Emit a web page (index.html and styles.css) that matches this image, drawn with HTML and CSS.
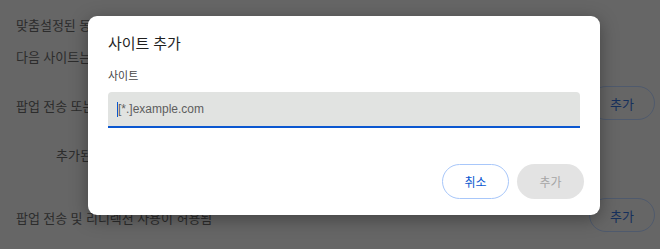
FILE: index.html
```html
<!DOCTYPE html>
<html lang="ko">
<head>
<meta charset="utf-8">
<title>사이트 추가</title>
<link rel="stylesheet" href="styles.css">
</head>
<body>
<div class="page">
  <div class="line">맞춤설정된 동작</div>
  <div class="line second">다음 사이트는 기본 설정 대신 맞춤 설정을 따릅니다</div>
  <div class="row r3">
    <span class="row-text">팝업 전송 또는 리디렉션 사용이 차단됨</span>
    <span class="bg-btn">추가</span>
  </div>
  <div class="line empty">추가된 사이트 없음</div>
  <div class="row r5">
    <span class="row-text">팝업 전송 및 리디렉션 사용이 허용됨</span>
    <span class="bg-btn">추가</span>
  </div>
</div>

<div class="dialog">
  <div class="title">사이트 추가</div>
  <div class="label">사이트</div>
  <div class="input"><span class="caret"></span><span class="placeholder">[*.]example.com</span></div>
  <div class="actions">
    <span class="btn cancel">취소</span>
    <span class="btn add">추가</span>
  </div>
</div>
</body>
</html>
```

FILE: styles.css
```css
html, body {
  margin: 0;
  padding: 0;
}
body {
  width: 660px;
  height: 249px;
  overflow: hidden;
  background: #666666;
  font-family: "Noto Sans", "Noto Sans CJK KR", sans-serif;
  position: relative;
}
.page {
  padding: 14px 5px 0 16px;
  color: #2c2c2c;
  font-size: 13px;
}
.line {
  height: 22px;
  line-height: 22px;
}
.second {
  margin-top: 10px;
}
.row {
  display: flex;
  align-items: center;
  justify-content: space-between;
  height: 34px;
}
.row-text {
  padding-top: 4px;
}
.r3 {
  margin-top: 18px;
}
.empty {
  margin-top: 24px;
  padding-left: 40px;
}
.r5 {
  margin-top: 32px;
}
.bg-btn {
  box-sizing: border-box;
  width: 66px;
  height: 34px;
  border: 1px solid #4f5a6d;
  border-radius: 17px;
  display: flex;
  align-items: center;
  justify-content: center;
  color: #16305c;
  font-size: 13px;
}
.dialog {
  position: absolute;
  left: 88px;
  top: 16px;
  width: 512px;
  box-sizing: border-box;
  background: #ffffff;
  border-radius: 9px;
  padding: 16px 16px 16px 20px;
  box-shadow: 0 4px 18px rgba(0, 0, 0, 0.35);
}
.title {
  height: 22px;
  line-height: 22px;
  font-size: 15px;
  color: #1f1f1f;
}
.label {
  margin-top: 14px;
  height: 16px;
  line-height: 16px;
  font-size: 11px;
  color: #474747;
}
.input {
  margin-top: 8px;
  margin-right: 4px;
  height: 34px;
  background: #e1e3e1;
  border-bottom: 2px solid #0b57d0;
  border-radius: 4px 4px 0 0;
  display: flex;
  align-items: center;
  padding-left: 9px;
}
.caret {
  width: 1px;
  height: 15px;
  background: #0b57d0;
}
.placeholder {
  font-family: "Liberation Sans", "Noto Sans", sans-serif;
  font-size: 12px;
  color: #5e5e5e;
}
.actions {
  margin-top: 36px;
  display: flex;
  justify-content: flex-end;
  gap: 8px;
}
.btn {
  box-sizing: border-box;
  width: 67px;
  height: 35px;
  border-radius: 18px;
  display: flex;
  align-items: center;
  justify-content: center;
  font-size: 12px;
}
.cancel {
  border: 1px solid #a8c7fa;
  color: #0b57d0;
}
.add {
  background: #e3e3e3;
  color: #a6a6a6;
}
```
